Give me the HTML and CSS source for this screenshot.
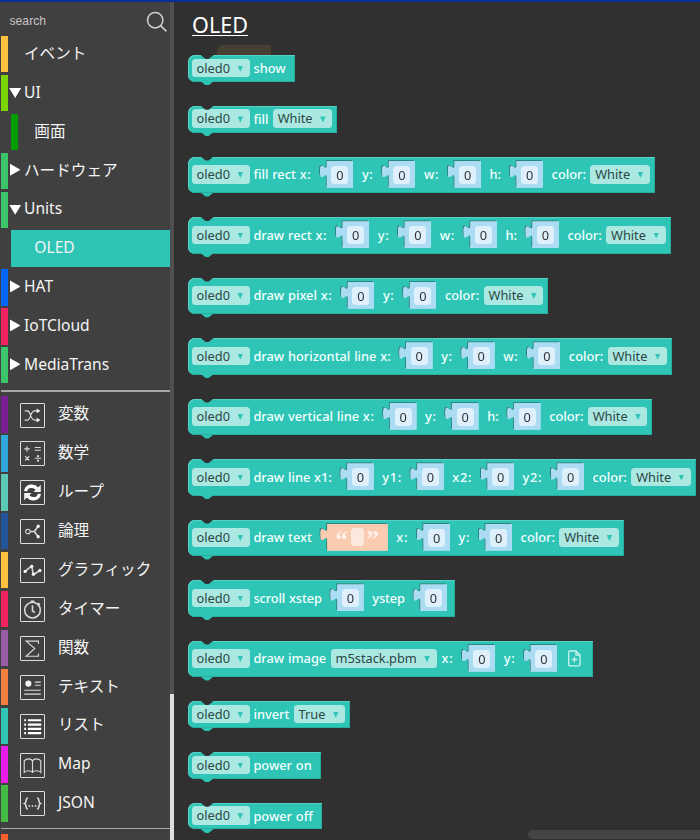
FILE: index.html
```html
<!DOCTYPE html>
<html lang="ja">
<head>
    <meta charset="UTF-8">
    <meta name="viewport" content="width=device-width, initial-scale=1.0">
    <link rel="stylesheet" href="styles.css">
    <title>UIFlow Blocks</title>
</head>
<body>
    <div class="app">
        <nav class="toolbox">
            <div class="search">
                <span>search</span>
                <svg width="22" height="22" viewBox="0 0 22 22"><circle cx="9.2" cy="9.2" r="7.7"/><path d="M14.6 14.6L20.4 20.4"/></svg>
            </div>
            <div class="cat yellow"><span class="arrow"></span><p>イベント</p></div>
            <div class="cat lime"><span class="arrow down"></span><p>UI</p></div>
            <div class="cat sub green"><p>画面</p></div>
            <div class="cat emerald"><span class="arrow right"></span><p>ハードウェア</p></div>
            <div class="cat emerald"><span class="arrow down"></span><p>Units</p></div>
            <div class="cat sub selected"><p>OLED</p></div>
            <div class="cat blue"><span class="arrow right"></span><p>HAT</p></div>
            <div class="cat pink"><span class="arrow right"></span><p>IoTCloud</p></div>
            <div class="cat emerald"><span class="arrow right"></span><p>MediaTrans</p></div>
            <div class="divider"></div>
            <div class="cat purple">
                <svg class="icon" viewBox="0 0 25 25"><path d="M4 7.5h3c4 0 2.5 10 8 10h5M4 17.5h3c4 0 2.5-10 8-10h5"/><path class="solid" d="M17 5l4 2.5-4 2.5zM17 15l4 2.5-4 2.5z"/></svg>
                <p>変数</p>
            </div>
            <div class="cat sky">
                <svg class="icon" viewBox="0 0 25 25"><path d="M3.5 7.5h6M6.5 4.5v6M15 6h6.5M15 9h6.5M4.5 15.5l4.5 4.5M9 15.5l-4.5 4.5M15 17.7h7"/><path class="solid" d="M17.5 14.3h2v2h-2zM17.5 19.2h2v2h-2z"/></svg>
                <p>数学</p>
            </div>
            <div class="cat mint">
                <svg class="icon" viewBox="0 0 25 25"><path class="thick" d="M5 11c.5-3.7 3.5-5.5 6.8-5.3 2.5.1 4.2 1 5.7 2.8M20 14c-.5 3.7-3.5 5.5-6.8 5.3-2.5-.1-4.2-1-5.7-2.8"/><path class="solid" d="M21.5 4v8h-8zM3.5 21v-8h8z"/></svg>
                <p>ループ</p>
            </div>
            <div class="cat navy">
                <svg class="icon" viewBox="0 0 25 25"><circle cx="7.5" cy="12.5" r="2.5"/><path class="medium" d="M10 12.5h4.5L18.5 7M14.5 12.5l4 5.5"/><circle class="solid" cx="18.7" cy="6.8" r="1.8"/><circle class="solid" cx="18.7" cy="18.2" r="1.8"/></svg>
                <p>論理</p>
            </div>
            <div class="cat yellow">
                <svg class="icon" viewBox="0 0 25 25"><path class="medium" d="M4.5 13.5L11.5 7.5 13.5 17 20.5 12.5"/><circle class="solid" cx="4.5" cy="13.5" r="1.8"/><circle class="solid" cx="11.7" cy="8" r="1.8"/><circle class="solid" cx="13.5" cy="16.5" r="1.8"/><circle class="solid" cx="20.5" cy="12.5" r="1.8"/></svg>
                <p>グラフィック</p>
            </div>
            <div class="cat pink">
                <svg class="icon" viewBox="0 0 25 25"><circle class="medium" cx="12.5" cy="13.2" r="8.5"/><path class="medium" d="M12.5 8v6l2.5 2M10.5 3.5h4M18.5 5.5l2 2"/></svg>
                <p>タイマー</p>
            </div>
            <div class="cat violet">
                <svg class="icon" viewBox="0 0 25 25"><path d="M19 7.500V4.500H5.500l9.500 8L5.500 21H19V18"/></svg>
                <p>関数</p>
            </div>
            <div class="cat orange">
                <svg class="icon" viewBox="0 0 25 25"><circle class="solid" cx="8" cy="8.3" r="3.3"/><path d="M15 6.7h6.5M15 10h6.5M3.500 15.500h18M3.500 19.700h18"/></svg>
                <p>テキスト</p>
            </div>
            <div class="cat teal">
                <svg class="icon" viewBox="0 0 25 25"><path class="bars" d="M3.500 5.700h2M7.500 5.700h14.500M3.500 10.400h2M7.500 10.400h14.500M3.500 15.100h2M7.500 15.100h14.500M3.500 19.700h2M7.500 19.700h14.500"/></svg>
                <p>リスト</p>
            </div>
            <div class="cat magenta">
                <svg class="icon" viewBox="0 0 25 25"><path d="M12.5 8v12M12.5 8C11.5 4.500 6 4.500 3.500 7.500V20c2.500-2.300 7-2.300 9 0 2-2.300 6.500-2.300 9 0V7.500C19 4.500 13.5 4.500 12.5 8z"/></svg>
                <p>Map</p>
            </div>
            <div class="cat leaf">
                <svg class="icon" viewBox="0 0 25 25"><path class="medium" d="M7.500 6.500c-3 0-1 5-3.500 6 2.500 1 .5 6 3.500 6M17.500 6.500c3 0 1 5 3.500 6-2.500 1-.5 6-3.500 6"/><path class="solid" d="M8.300 14.500h1.600v1.600H8.300zM11.700 14.500h1.600v1.600h-1.600zM15.100 14.500h1.600v1.600h-1.600z"/></svg>
                <p>JSON</p>
            </div>
            <div class="divider last"></div>
            <div class="cat ember"></div>
        </nav>
        <div class="track"><div class="thumb"></div></div>

        <main class="flyout">
            <h1>OLED</h1>
            <div class="ghost"></div>
            <div class="block">
                <span class="drop">oled0</span><span class="label">show</span>
            </div>
            <div class="block">
                <span class="drop">oled0</span><span class="label">fill</span><span class="drop">White</span>
            </div>
            <div class="block tall">
                <span class="drop">oled0</span><span class="label">fill rect <span class="arg">x:</span></span><span class="slot"><span class="num"><b>0</b></span></span>
                <span class="label arg">y:</span><span class="slot"><span class="num"><b>0</b></span></span>
                <span class="label arg">w:</span><span class="slot"><span class="num"><b>0</b></span></span>
                <span class="label">h:</span><span class="slot"><span class="num"><b>0</b></span></span>
                <span class="label">color:</span><span class="drop">White</span>
            </div>
            <div class="block tall">
                <span class="drop">oled0</span><span class="label">draw rect <span class="arg">x:</span></span><span class="slot"><span class="num"><b>0</b></span></span>
                <span class="label arg">y:</span><span class="slot"><span class="num"><b>0</b></span></span>
                <span class="label arg">w:</span><span class="slot"><span class="num"><b>0</b></span></span>
                <span class="label">h:</span><span class="slot"><span class="num"><b>0</b></span></span>
                <span class="label">color:</span><span class="drop">White</span>
            </div>
            <div class="block tall">
                <span class="drop">oled0</span><span class="label">draw pixel <span class="arg">x:</span></span><span class="slot"><span class="num"><b>0</b></span></span>
                <span class="label arg">y:</span><span class="slot"><span class="num"><b>0</b></span></span>
                <span class="label">color:</span><span class="drop">White</span>
            </div>
            <div class="block tall">
                <span class="drop">oled0</span><span class="label">draw horizontal line x:</span><span class="slot"><span class="num"><b>0</b></span></span>
                <span class="label arg">y:</span><span class="slot"><span class="num"><b>0</b></span></span>
                <span class="label arg">w:</span><span class="slot"><span class="num"><b>0</b></span></span>
                <span class="label">color:</span><span class="drop">White</span>
            </div>
            <div class="block tall">
                <span class="drop">oled0</span><span class="label">draw vertical line <span class="arg">x:</span></span><span class="slot"><span class="num"><b>0</b></span></span>
                <span class="label arg">y:</span><span class="slot"><span class="num"><b>0</b></span></span>
                <span class="label">h:</span><span class="slot"><span class="num"><b>0</b></span></span>
                <span class="label">color:</span><span class="drop">White</span>
            </div>
            <div class="block tall">
                <span class="drop">oled0</span><span class="label">draw line x1:</span><span class="slot"><span class="num"><b>0</b></span></span>
                <span class="label arg">y1:</span><span class="slot"><span class="num"><b>0</b></span></span>
                <span class="label arg">x2:</span><span class="slot"><span class="num"><b>0</b></span></span>
                <span class="label arg">y2:</span><span class="slot"><span class="num"><b>0</b></span></span>
                <span class="label">color:</span><span class="drop">White</span>
            </div>
            <div class="block tall">
                <span class="drop">oled0</span><span class="label">draw text</span><span class="slot"><span class="num str"><i>“</i><b></b><i>”</i></span></span>
                <span class="label arg">x:</span><span class="slot"><span class="num"><b>0</b></span></span>
                <span class="label arg">y:</span><span class="slot"><span class="num"><b>0</b></span></span>
                <span class="label">color:</span><span class="drop">White</span>
            </div>
            <div class="block tall">
                <span class="drop">oled0</span><span class="label snug">scroll xstep</span><span class="slot"><span class="num"><b>0</b></span></span>
                <span class="label snug">ystep</span><span class="slot"><span class="num"><b>0</b></span></span>
            </div>
            <div class="block tall">
                <span class="drop">oled0</span><span class="label">draw image</span><span class="drop">m5stack.pbm</span>
                <span class="label arg near">x:</span><span class="slot"><span class="num"><b>0</b></span></span>
                <span class="label arg">y:</span><span class="slot"><span class="num"><b>0</b></span></span>
                <svg class="file" width="13" height="17" viewBox="0 0 13 17"><path d="M2 1h6l4 4v9.500a1.300 1.300 0 0 1-1.300 1.300H2A1.300 1.300 0 0 1 .7 14.500V2.300A1.300 1.300 0 0 1 2 1zM8 1v4h4M6.400 6.800v5.400M3.700 9.500h5.400"/></svg>
            </div>
            <div class="block">
                <span class="drop">oled0</span><span class="label">invert</span><span class="drop">True</span>
            </div>
            <div class="block">
                <span class="drop">oled0</span><span class="label">power on</span>
            </div>
            <div class="block">
                <span class="drop">oled0</span><span class="label">power off</span>
            </div>
            <div class="hscroll"></div>
        </main>
    </div>
</body>
</html>
```

FILE: styles.css
```css
* {
    box-sizing: border-box;
}
body {
    margin: 0;
    background-color: #303030;
    font-family: "Noto Sans", "Noto Sans CJK JP", sans-serif;
    color: #fff;
    overflow: hidden;
}
p, h1 {
    margin: 0;
}
.app {
    display: flex;
    height: 840px;
    overflow: hidden;
    border-top: 2px solid #052f96;
}

/* Category list */
.toolbox {
    width: 170px;
    padding-left: 1px;
    background-color: #404040;
    flex-shrink: 0;
}
.search {
    display: flex;
    justify-content: space-between;
    height: 34px;
    padding: 9px 2px 0 8.5px;
    font-family: "Liberation Sans", sans-serif;
    font-size: 12.2px;
    line-height: 20px;
    color: #c4c4c4;
}
.search svg {
    fill: none;
    stroke: #d0d0d0;
    stroke-width: 1.5;
}
.cat {
    display: flex;
    align-items: center;
    height: 36.3px;
    margin-bottom: 2.6px;
    border-left: 7px solid;
    font-size: 15.6px;
    line-height: 20px;
    white-space: nowrap;
}
.cat p {
    color: #f4f4f4;
    padding-bottom: 2.5px;
}
.arrow {
    width: 16px;
    flex-shrink: 0;
    padding-left: 1.2px;
}
.arrow::before {
    content: "";
    display: block;
}
.arrow.down::before {
    width: 12px;
    height: 10px;
    background-color: #fff;
    clip-path: polygon(0 0, 100% 0, 50% 100%);
}
.arrow.right::before {
    width: 10.5px;
    height: 12px;
    margin-left: 0.8px;
    margin-bottom: 2px;
    background-color: #fff;
    clip-path: polygon(0 0, 100% 50%, 0 100%);
}
.sub {
    margin-left: 10.3px;
}
.sub p {
    padding-left: 16px;
}
.icon {
    width: 25px;
    height: 25px;
    margin: 1px 13px 0 12px;
    border: 1px solid #dcdcdc;
    border-radius: 1px;
    fill: none;
    stroke: #dcdcdc;
    stroke-width: 1.2;
}
.icon .solid {
    fill: #f4f4f4;
    stroke: none;
}
.icon .medium {
    stroke-width: 1.7;
}
.icon .thick {
    stroke: #fff;
    stroke-width: 3.6;
}
.icon .bars {
    stroke: #fff;
    stroke-width: 2.4;
}
.divider {
    height: 1.5px;
    margin: 7px 0 4.5px;
    background-color: #a8a8a8;
}
.divider.last {
    margin-top: 6px;
}

.yellow { border-color: #ffc13d; }
.lime { border-color: #7ad600; }
.green { border-color: #009c00; }
.emerald { border-color: #3dc56a; }
.blue { border-color: #0068ff; }
.pink { border-color: #f2245f; }
.purple { border-color: #7a1f96; }
.sky { border-color: #30a8dd; }
.mint { border-color: #5bc9b5; }
.navy { border-color: #22559c; }
.violet { border-color: #995ba5; }
.orange { border-color: #f38040; }
.teal { border-color: #2ec5b6; }
.magenta { border-color: #e81de8; }
.leaf { border-color: #44bb44; }
.ember { border-color: #ff5f2b; }
.selected {
    border-color: #2ec5b6;
    background-color: #2ec5b6;
}

.track {
    width: 4px;
    padding-top: 692px;
    background-color: #4f4f4f;
    flex-shrink: 0;
}
.thumb {
    height: 146px;
    background-color: #dedede;
}

/* Block list */
.flyout {
    position: relative;
    flex: 1;
    display: flex;
    flex-direction: column;
    align-items: flex-start;
    gap: 24px;
    padding-left: 13.6px;
}
h1 {
    height: 29px;
    padding: 7.5px 0 0 4.5px;
    font-size: 21.6px;
    font-weight: 400;
    line-height: 30px;
    text-decoration: underline;
    text-decoration-thickness: 1px;
    text-underline-offset: 1.5px;
}
/* leftover block from the workspace, seen through the flyout */
.ghost {
    position: absolute;
    left: 43px;
    top: 43px;
    width: 54px;
    height: 20px;
    border-radius: 6px 0 0 0;
    background-color: #463f33;
}
.block {
    position: relative;
    display: flex;
    align-items: center;
    height: 26.8px;
    padding: 0 9.6px 1px 4.2px;
    border-radius: 7px 0 0 7px;
    background-color: #2ec5b6;
    box-shadow: inset 0.8px 0.8px 0 #64d5ca, inset -0.8px -0.8px 0 #24a89b;
    font-size: 12.8px;
    line-height: 18px;
    white-space: nowrap;
    flex-shrink: 0;
}
.tall {
    height: 36.5px;
}
.block::before, .block::after {
    content: "";
    position: absolute;
    left: 13px;
    width: 13px;
    height: 4px;
    clip-path: polygon(0 0, 100% 0, 62% 100%, 38% 100%);
}
.block::before {
    top: 0;
    background-color: #303030;
}
.block::after {
    top: calc(100% - 0.5px);
    background-color: #2ec5b6;
}
.drop {
    height: 18.5px;
    padding: 0 4.8px;
    border-radius: 3.5px;
    background-color: #abe8e2;
    color: #2c4744;
}
.drop::after {
    content: "";
    display: inline-block;
    width: 5.5px;
    height: 6px;
    margin: 0 2px 1px 7.5px;
    background-color: #2ec5b6;
    clip-path: polygon(0 0, 100% 0, 50% 100%);
}
.drop:last-child {
    margin-right: -4.6px;
}
.label {
    margin-left: 3.6px;
    font-weight: 500;
    word-spacing: 0.5px;
    color: #f4fffd;
}
.label + .drop {
    margin-left: 4.5px;
}
.slot {
    margin-left: 8.5px;
    filter: drop-shadow(-0.5px -0.5px 0 #28877e) drop-shadow(0.5px 0.5px 0 #7fdcd6);
}
.slot:last-child {
    margin-right: -1.3px;
}
.slot + .label {
    margin-left: 8.5px;
}
.arg {
    letter-spacing: 0.65px;
}
.snug {
    letter-spacing: -0.1px;
}
.label.near {
    margin-left: 5px;
}
/* value block with the puzzle tab on its left side */
.num {
    display: flex;
    width: 33.5px;
    height: 27px;
    padding: 5px 5px 4px 11.5px;
    background-color: #acdcf3;
    clip-path: path("M6.8 0H33.5V27H6.8V17C6.8 8.5 0 23.8 0 10.6C0 -2.5 6.8 12.7 6.8 4.2Z");
}
.num b {
    width: 17px;
    height: 18px;
    border-radius: 3.5px;
    background-color: #ddf0fb;
    color: #333;
    font-weight: 400;
    text-align: center;
}
.str {
    width: 67.5px;
    align-items: center;
    justify-content: space-between;
    padding: 0 9px 0 15px;
    background-color: #f9cbb1;
    clip-path: path("M6.8 0H67.5V27H6.8V17C6.8 8.5 0 23.8 0 10.6C0 -2.5 6.8 12.7 6.8 4.2Z");
}
.str b {
    width: 13px;
    background-color: #fce8dd;
}
.str i {
    font-family: "Liberation Serif", serif;
    font-size: 25px;
    font-style: normal;
    font-weight: 700;
    line-height: 27px;
    padding-top: 4px;
    color: #fff1e9;
}
.file {
    margin: 0 2px 0 11px;
    fill: none;
    stroke: #c9f3ee;
    stroke-width: 1.3;
}
.hscroll {
    position: absolute;
    left: 354px;
    right: 0;
    top: 828px;
    height: 9px;
    border-radius: 5px 0 0 5px;
    background-color: #444;
}
```
